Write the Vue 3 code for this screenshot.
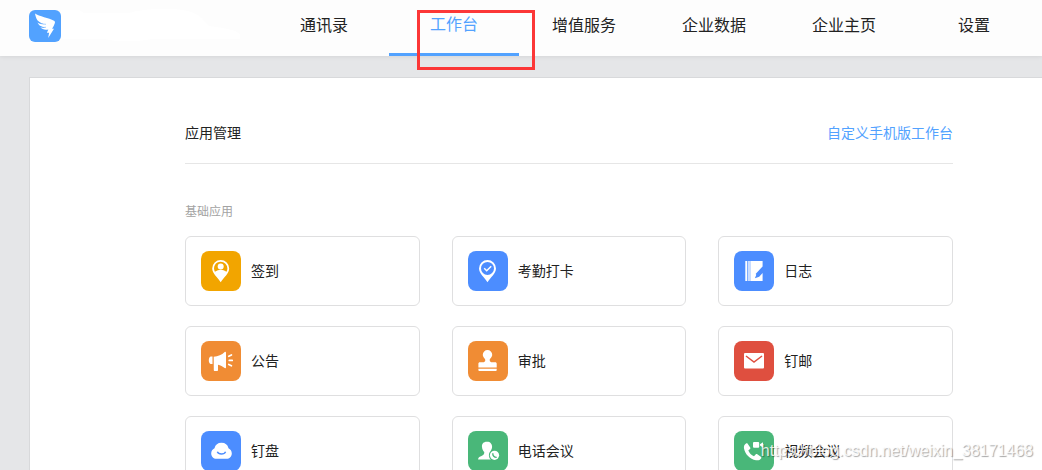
<script setup>
const tabs = [
  { label: '通讯录' },
  { label: '工作台', active: true },
  { label: '增值服务' },
  { label: '企业数据' },
  { label: '企业主页' },
  { label: '设置' }
]

const apps = [
  { name: '签到', icon: 'checkin', tone: 'amber' },
  { name: '考勤打卡', icon: 'attendance', tone: 'blue' },
  { name: '日志', icon: 'journal', tone: 'blue' },
  { name: '公告', icon: 'notice', tone: 'orange' },
  { name: '审批', icon: 'approval', tone: 'orange' },
  { name: '钉邮', icon: 'mail', tone: 'red' },
  { name: '钉盘', icon: 'drive', tone: 'blue' },
  { name: '电话会议', icon: 'phone', tone: 'green' },
  { name: '视频会议', icon: 'video', tone: 'green' }
]
</script>

<template>
  <div class="page">
    <header class="header">
      <a class="logo" href="#" aria-label="首页">
        <svg viewBox="0 0 32 32" width="32" height="32" aria-hidden="true">
          <rect width="32" height="32" rx="6" fill="#52a2ff" />
          <path
            d="M6 3.600C10 6.500 20 8 25 10.800c1 .6 1.200 1.300.8 2.400-.6 1.900-1.500 3.700-2.700 5.600H25l-5.800 9.200.9-5.300h-2.200l1.400-3.200c-3 .8-6.200.1-8-2.400 1.800.6 3.600.7 5.400.4-3.600-.3-7-1.700-8.200-4.900 1.900 1 4.200 1.500 6.600 1.600C11.500 13 8.200 11.200 7.300 8.300 6.700 6.700 6.200 5.200 6 3.600z"
            fill="#fff"
          />
          <path d="M8.500 12.300c2.500 1.300 5.200 1.800 8.500 2M10.500 16.800c2 .7 4 .8 6.500.4" fill="none" stroke="#52a2ff" stroke-width=".5" />
        </svg>
      </a>
      <svg class="company" viewBox="0 0 180 36" width="180" height="36" aria-hidden="true">
        <path d="M4 3h14l5 3h45c16-5 60-8 73 5l7 8c15 2 29 4 31 9v4h-88c-16 3-34 3-48 0H0V3z" fill="#fff" />
      </svg>
      <nav class="tabs">
        <a v-for="tab in tabs" :key="tab.label" href="#" class="tab" :class="{ active: tab.active }">
          {{ tab.label }}
          <span v-if="tab.active" class="highlight"></span>
        </a>
      </nav>
    </header>

    <main class="panel">
      <div class="title-row">
        <h1>应用管理</h1>
        <a href="#">自定义手机版工作台</a>
      </div>
      <h2>基础应用</h2>
      <div class="grid">
        <a v-for="app in apps" :key="app.name" href="#" class="card">
          <span class="icon" :class="app.tone">
            <svg viewBox="0 0 40 40" width="40" height="40" fill="#fff" aria-hidden="true">
              <template v-if="app.icon === 'checkin'">
                <path fill-rule="evenodd" d="M19.700 9a8.500 8.500 0 0 0-8.500 8.500c0 5 5.500 9 8.500 13.700 3-4.700 8.500-8.700 8.500-13.700A8.500 8.500 0 0 0 19.700 9zm0 1.700a6.700 6.700 0 0 1 6.700 6.700c0 1.300-.3 2.300-.9 3.300a10 10 0 0 0-11.600 0 6.700 6.700 0 0 1 5.800-10z" />
                <circle cx="19.700" cy="15.400" r="3" />
              </template>
              <template v-else-if="app.icon === 'attendance'">
                <path fill-rule="evenodd" d="M19.500 9a8.500 8.500 0 0 0-8.500 8.500c0 5 5.500 9 8.500 13.700 3-4.700 8.500-8.700 8.500-13.700A8.500 8.500 0 0 0 19.500 9zm0 1.900a6.500 6.500 0 1 1 0 13 6.500 6.500 0 0 1 0-13z" />
                <path d="M16.200 17.300l2.500 2.400 4.500-4.400" fill="none" stroke="#fff" stroke-width="1.500" />
              </template>
              <template v-else-if="app.icon === 'journal'">
                <path d="M11.300 10h2v20h-2zM14.300 10h14.300v6.500l-6 6.500-1.700 4.300 4.300-1.500 3.400-3.800V30H14.300z" />
                <path d="M16 10v20" stroke="#4c8dff" stroke-width=".6" />
                <path d="M28.500 15.500l1.200 1.200-6.700 7.600-1.400-1.200z" fill="#4c8dff" />
              </template>
              <template v-else-if="app.icon === 'notice'">
                <path d="M11.500 15.500V23H10c-1.500 0-2.200-1.800-2.200-3.700s.7-3.800 2.200-3.800zM12.700 15.700c4.500-.2 8-1.800 11-4.700.7-.5 1.300-.1 1.300.7v14.800c0 .8-.7 1.100-1.300.5-2-1.600-4.200-2.700-6.700-3.300v5.200c0 .6-.4 1-1 1h-2.200c-.6 0-1-.4-1-1z" />
                <path d="M27.800 15.200l2.600-1.200M28.300 19.400h2.900M27.800 23.500l2.600 1.200" fill="none" stroke="#fff" stroke-width="1.800" stroke-linecap="round" />
              </template>
              <template v-else-if="app.icon === 'approval'">
                <path d="M19.500 9a4.700 4.700 0 0 0-4.700 4.700c0 2.900 2.700 3.600 2.500 5.600-.1 1.500-1.200 2-2.500 2h-3c-.8 0-1.400.6-1.400 1.400v3.700h18.300v-3.700c0-.8-.6-1.400-1.400-1.400h-3.100c-1.300 0-2.400-.5-2.500-2-.2-2 2.500-2.700 2.500-5.600A4.700 4.700 0 0 0 19.500 9zM10.400 27.800h18.300v1.100c0 .6-.5 1.100-1.100 1.100H11.500c-.6 0-1.100-.5-1.100-1.100z" />
              </template>
              <template v-else-if="app.icon === 'mail'">
                <rect x="10" y="12" width="20" height="15.600" rx="1" />
                <path d="M12 15l8 6 8-6" fill="none" stroke="#df4f3f" stroke-width="1.500" />
              </template>
              <template v-else-if="app.icon === 'drive'">
                <path d="M13.500 17.300a7.200 7.200 0 0 1 14 0c2 1 3.300 2.900 3.300 5.200 0 3-2.300 5.300-5.300 5.300h-10c-3 0-5.300-2.300-5.300-5.300 0-2.300 1.300-4.200 3.300-5.200z" />
                <path d="M16.300 20.700c1.300 3 6.900 3 8.300 0" fill="none" stroke="#4c8dff" stroke-width="1.400" />
              </template>
              <template v-else-if="app.icon === 'phone'">
                <path d="M19.300 10.700c-3.500-.3-5.800 2-5.300 5.200.2 2.600 1.200 4 2.300 5.100.2 2.500-1.300 3.300-3.300 4.200-1.900.8-2.900 1.500-2.900 3.300h12.700a5.800 5.800 0 0 1-.2-8.500c.8-1.200 1.500-2.500 1.500-4.300 0-2.900-1.900-5-4.800-5z" />
                <circle cx="26.500" cy="24.300" r="4.600" />
                <path d="M24.800 22.200c-.2 2.500 1.500 4.300 3.900 4.200" fill="none" stroke="#49b779" stroke-width="1.400" />
              </template>
              <template v-else>
                <path d="M13.500 12.600l2.700 3.800c.4.600.3 1.200-.2 1.700l-1.700 1.500c1.100 2.700 3 4.600 5.700 5.600l1.600-1.700c.5-.5 1.100-.6 1.700-.2l3.500 2.500c.6.400.7 1 .3 1.600-1.200 1.600-2.800 2.200-5.100 1.800-6.200-1.300-11-6-12-11.800-.4-2.300.3-3.900 2-5 .5-.4 1.100-.3 1.500.2z" />
                <rect x="19" y="11" width="6.200" height="5.800" rx="1" />
                <path d="M26 13.300l3-2v5.300l-3-2z" />
              </template>
            </svg>
          </span>
          <span class="name">{{ app.name }}</span>
        </a>
      </div>
    </main>
    <div class="watermark">https://blog.csdn.net/weixin_38171468</div>
  </div>
</template>

<style>
body {
  background: #e5e6e8;
}
</style>

<style scoped>
.page {
  position: relative;
  display: flex;
  flex-direction: column;
  height: 100vh;
  overflow: hidden;
  box-sizing: border-box;
  color: #222;
  font-family: "Liberation Sans", "Noto Sans CJK SC", sans-serif;
  font-size: 14px;
  line-height: 20px;
}

a {
  color: inherit;
  text-decoration: none;
}

.header {
  position: relative;
  display: flex;
  flex-shrink: 0;
  height: 56px;
  padding: 0 3px 0 29px;
  background: #fdfdfd;
  box-shadow: 0 0 5px rgba(0, 0, 0, 0.1);
}

.logo {
  height: 32px;
  margin-top: 10px;
}

.company {
  margin-top: 7px;
}

.tabs {
  display: flex;
  margin-left: auto;
}

.tab {
  position: relative;
  box-sizing: border-box;
  width: 130px;
  height: 56px;
  font-size: 16px;
  line-height: 52px;
  text-align: center;
}

.tab.active {
  color: #52a2ff;
  line-height: 50px;
  border-bottom: 3px solid #52a2ff;
}

.highlight {
  position: absolute;
  top: 10px;
  left: 28px;
  box-sizing: border-box;
  width: 118px;
  height: 60px;
  border: 3px solid #fc3737;
}

.panel {
  flex: 1 0 auto;
  margin: 21px 0 0 29px;
  padding: 35px 89px 40px 155px;
  background: #fff;
  border: solid #d8d9db;
  border-width: 1px 0 0 1px;
}

.title-row {
  display: flex;
  justify-content: space-between;
  align-items: center;
  height: 50px;
  border-bottom: 1px solid #e6e6e6;
}

.title-row h1,
.title-row a {
  margin: 0 0 10px;
  font-size: 14px;
  font-weight: 400;
}

.title-row a {
  color: #52a2ff;
}

h2 {
  margin: 38px 0 14px;
  color: #a3a3a3;
  font-size: 12px;
  font-weight: 400;
  line-height: 20px;
}

.grid {
  display: grid;
  grid-template-columns: repeat(3, 1fr);
  gap: 20px 32px;
}

.card {
  display: flex;
  align-items: center;
  gap: 10px;
  box-sizing: border-box;
  height: 70px;
  padding: 0 15px;
  border: 1px solid #dfdfe0;
  border-radius: 6px;
}

.icon {
  width: 40px;
  height: 40px;
  border-radius: 8px;
}

.icon svg {
  display: block;
}

.amber {
  background: #f2a500;
}

.blue {
  background: #4c8dff;
}

.orange {
  background: #f08c34;
}

.red {
  background: #df4f3f;
}

.green {
  background: #49b779;
}

.watermark {
  position: absolute;
  right: 9px;
  bottom: 9px;
  color: rgba(255, 255, 255, 0.85);
  font-family: "Liberation Sans", sans-serif;
  font-size: 16px;
  text-shadow: 1px 1px 1px rgba(0, 0, 0, 0.35);
}
</style>
